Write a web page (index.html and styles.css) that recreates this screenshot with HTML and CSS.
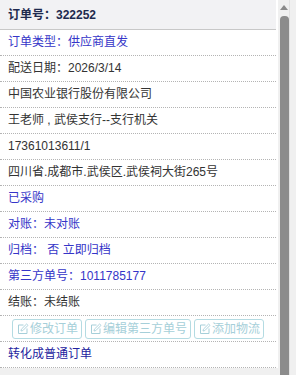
FILE: index.html
```html
<!DOCTYPE html>
<html lang="zh">
<head>
  <meta charset="UTF-8">
  <meta name="viewport" content="width=device-width, initial-scale=1.0">
  <title>订单详情</title>
  <link rel="stylesheet" href="styles.css">
</head>
<body>
  <div class="frame">
    <div class="panel">
      <div class="head">订单号：322252</div>
      <div class="row blue">订单类型：供应商直发</div>
      <div class="row">配送日期：2026/3/14</div>
      <div class="row">中国农业银行股份有限公司</div>
      <div class="row">王老师 , 武侯支行--支行机关</div>
      <div class="row">17361013611/1</div>
      <div class="row">四川省.成都市.武侯区.武侯祠大街265号</div>
      <div class="row blue">已采购</div>
      <div class="row blue">对账：未对账</div>
      <div class="row blue">归档： 否 立即归档</div>
      <div class="row blue">第三方单号：1011785177</div>
      <div class="row">结账：未结账</div>
      <div class="row btns">
        <span class="btn">
          <svg viewBox="0 0 12 12"><path d="M6.5 2H1.5v8.5H10V5.5" fill="none" stroke="currentColor" stroke-width="1"/><path d="M4 8l.4-1.8L9.6 1l1.4 1.4L5.8 7.6z" fill="none" stroke="currentColor" stroke-width="0.9"/></svg>修改订单
        </span>
        <span class="btn">
          <svg viewBox="0 0 12 12"><path d="M6.5 2H1.5v8.5H10V5.5" fill="none" stroke="currentColor" stroke-width="1"/><path d="M4 8l.4-1.8L9.6 1l1.4 1.4L5.8 7.6z" fill="none" stroke="currentColor" stroke-width="0.9"/></svg>编辑第三方单号
        </span>
        <span class="btn">
          <svg viewBox="0 0 12 12"><path d="M6.5 2H1.5v8.5H10V5.5" fill="none" stroke="currentColor" stroke-width="1"/><path d="M4 8l.4-1.8L9.6 1l1.4 1.4L5.8 7.6z" fill="none" stroke="currentColor" stroke-width="0.9"/></svg>添加物流
        </span>
      </div>
      <div class="row dark">转化成普通订单</div>
    </div>
    <div class="scrollbar">
      <div class="arrow"></div>
      <div class="thumb"></div>
    </div>
  </div>
</body>
</html>
```

FILE: styles.css
```css
body {
  margin: 0;
  background: #f0f0f0;
  font-family: "Liberation Sans", "Noto Sans CJK SC", sans-serif;
  font-size: 12px;
  color: #333;
}
.frame {
  display: flex;
  height: 375px;
  overflow: hidden;
}
.panel {
  width: 276px;
  background: #fff;
  align-self: flex-start;
  border-right: 2px solid #fff;
}
.head {
  height: 30px;
  line-height: 30px;
  padding-left: 8px;
  background: #f2f2f4;
  border-bottom: 1px solid #c8c8c8;
  font-size: 12px;
  font-weight: bold;
  color: #1e2a4e;
  box-sizing: border-box;
}
.row {
  height: 26px;
  line-height: 25px;
  padding-left: 8px;
  border-bottom: 1px dotted #b4b4b4;
  box-sizing: border-box;
  white-space: nowrap;
}
.blue {
  color: #3535c8;
}
.dark {
  color: #22229e;
}
.btns {
  display: flex;
  align-items: center;
  gap: 3px;
  padding-left: 12px;
}
.btn {
  display: flex;
  align-items: center;
  height: 20px;
  padding: 0 3px 0 4px;
  border: 1px solid #b4dbe2;
  border-radius: 3px;
  color: #a6cfd9;
  line-height: 18px;
  box-sizing: border-box;
}
.btn svg {
  width: 12px;
  height: 12px;
  margin-right: 1px;
}
.scrollbar {
  width: 10px;
  margin-left: 1px;
  background: #f0f0f0;
  border-right: 1px solid #e2e2e2;
  display: flex;
  flex-direction: column;
  align-items: center;
}
.arrow {
  margin-top: 5px;
  width: 0;
  height: 0;
  border-left: 4px solid transparent;
  border-right: 4px solid transparent;
  border-bottom: 5px solid #8a8a8a;
}
.thumb {
  margin-top: 6px;
  width: 9px;
  flex: 1;
  background: #8c8c8c;
  border-radius: 4px 4px 0 0;
}
```
